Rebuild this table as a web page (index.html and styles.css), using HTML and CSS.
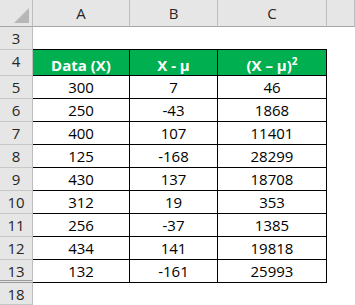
FILE: index.html
```html
<!DOCTYPE html>
<html>
<head>
<meta charset="utf-8">
<link rel="stylesheet" href="styles.css">
</head>
<body>
<div class="sheet">
  <div class="corner"><span class="tri"></span></div>
  <div class="colhead">A</div>
  <div class="colhead">B</div>
  <div class="colhead">C</div>
  <div class="colhead"></div>

  <div class="rowhead">3</div>
  <div class="blank top"></div><div class="blank top"></div><div class="blank top"></div><div class="blank"></div>

  <div class="rowhead">4</div>
  <div class="cell head">Data (X)</div>
  <div class="cell head">X - μ</div>
  <div class="cell head">(X – μ)<sup>2</sup></div>
  <div class="blank"></div>

  <div class="rowhead">5</div><div class="cell">300</div><div class="cell">7</div><div class="cell">46</div><div class="blank"></div>
  <div class="rowhead">6</div><div class="cell">250</div><div class="cell">-43</div><div class="cell">1868</div><div class="blank"></div>
  <div class="rowhead">7</div><div class="cell">400</div><div class="cell">107</div><div class="cell">11401</div><div class="blank"></div>
  <div class="rowhead">8</div><div class="cell">125</div><div class="cell">-168</div><div class="cell">28299</div><div class="blank"></div>
  <div class="rowhead">9</div><div class="cell">430</div><div class="cell">137</div><div class="cell">18708</div><div class="blank"></div>
  <div class="rowhead">10</div><div class="cell">312</div><div class="cell">19</div><div class="cell">353</div><div class="blank"></div>
  <div class="rowhead">11</div><div class="cell">256</div><div class="cell">-37</div><div class="cell">1385</div><div class="blank"></div>
  <div class="rowhead">12</div><div class="cell">434</div><div class="cell">141</div><div class="cell">19818</div><div class="blank"></div>
  <div class="rowhead hidden-below">13</div><div class="cell">132</div><div class="cell">-161</div><div class="cell">25993</div><div class="blank"></div>

  <div class="rowhead last">18</div>
  <div class="blank"></div><div class="blank"></div><div class="blank"></div><div class="blank"></div>
</div>
</body>
</html>
```

FILE: styles.css
```css
html, body {
  margin: 0;
  padding: 0;
  background: #ffffff;
}

.sheet {
  display: grid;
  grid-template-columns: 33px 97px 88px 109px 28px;
  grid-template-rows: 27px 23px 26px repeat(9, 23px) 22px;
  width: 355px;
  height: 305px;
  overflow: hidden;
  font-family: "Open Sans", "Noto Sans", sans-serif;
  font-size: 15px;
  color: #000;
}

.sheet > div {
  box-sizing: border-box;
}

.corner {
  background: #e6e6e6;
  border-right: 1px solid #bdbdbd;
  border-bottom: 1px solid #a6a6a6;
  position: relative;
}

.tri {
  position: absolute;
  right: 3px;
  bottom: 3px;
  width: 0;
  height: 0;
  border-style: solid;
  border-width: 0 0 15px 15px;
  border-color: transparent transparent #b7b7b7 transparent;
}

.colhead {
  background: #e6e6e6;
  border-right: 1px solid #bdbdbd;
  border-bottom: 1px solid #a6a6a6;
  color: #262626;
  font-size: 15px;
  text-align: center;
  line-height: 27px;
  padding-top: 0;
}

.rowhead {
  background: #e6e6e6;
  border-right: 1px solid #bdbdbd;
  border-bottom: 1px solid #c6c6c6;
  color: #262626;
  text-align: center;
  line-height: 23px;
}

.rowhead.hidden-below {
  border-bottom: 3px double #9a9a9a;
}

.blank {
  background: #fff;
}

.blank.top {
  border-bottom: 1px solid #000;
}

.cell {
  border-right: 1px solid #000;
  border-bottom: 1px solid #000;
  text-align: center;
  line-height: 22px;
}

.cell.head {
  background: #00b050;
  color: #fff;
  font-weight: bold;
  line-height: 20px;
  padding-top: 5px;
}

.cell.head sup {
  font-size: 10px;
  line-height: 0;
  vertical-align: 6px;
}
```
